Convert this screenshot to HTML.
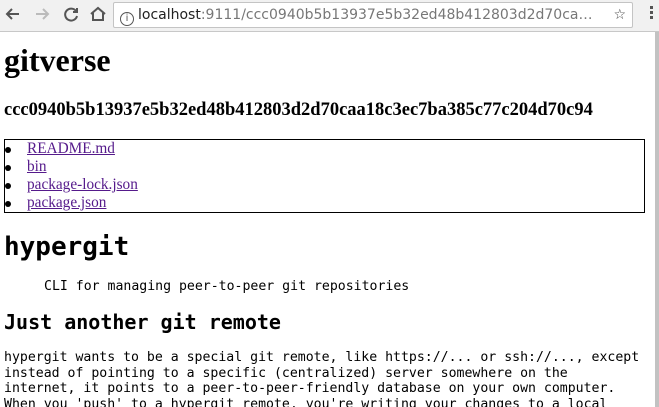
<!DOCTYPE html>
<html><head><meta charset="utf-8"><style>
html,body{margin:0;padding:0;width:659px;height:407px;overflow:hidden;background:#fff}
#chrome{position:absolute;left:0;top:0;width:659px;height:31px;background:#f1f1f1;border-bottom:1px solid #c8c8c8;font-family:"DejaVu Sans",sans-serif}
#url{position:absolute;left:113px;top:2px;width:518px;height:24px;background:#fff;border:1px solid #c4c4c4;border-radius:2px;font-size:14px;line-height:24px;color:#777;white-space:nowrap;overflow:hidden}
#page{position:absolute;left:0;top:32px;width:655px;height:375px;overflow:hidden}
#sb{position:absolute;left:655px;top:32px;width:4px;height:375px;background:#c2c2c2}
.c{margin:0 10px 0 4px;font-family:"Liberation Serif",serif}
h1.t{font-family:"Liberation Serif",serif;font-size:32px;margin:8px 0 0;line-height:40px}
h2.h{font-family:"Liberation Serif",serif;font-size:18.5px;margin:18px 0 0;line-height:24px;white-space:nowrap}
ul{margin:17px 0 0;padding:0 0 0 22px;border:1px solid #000;list-style:none;font-size:15.3px;line-height:18px}
ul li{position:relative}
ul li::before{content:"";position:absolute;left:-22px;top:7px;width:6px;height:6px;border-radius:50%;background:#000}
a{color:#551a8b;text-decoration:underline}
.m{font-family:"DejaVu Sans Mono",monospace}
h1.m{font-size:26px;margin:17px 0 0;line-height:34px}
pre{font-family:"DejaVu Sans Mono",monospace;font-size:13.2px;margin:15px 0 0 40px}
h2.m{font-size:20px;margin:14px 0 0;line-height:28px}
p.m{font-size:13.2px;line-height:15.7px;margin:14px 0 0;white-space:pre}
</style></head><body>
<div id="chrome">
<svg width="110" height="31" style="position:absolute;left:0;top:0">
<g fill="none" stroke-width="2">
<path d="M19 14H7M12 9l-5 5 5 5" stroke="#555"/>
<path d="M36 14h12M43 9l5 5-5 5" stroke="#bbb"/>
<path d="M76 11a6 6 0 1 0 1 5" stroke="#555"/><path d="M77 8v4h-4" stroke="#555"/>
<path d="M91 14l7-6 7 6M93 13v7h10v-7" stroke="#555"/>
</g></svg>
<div id="url"><span style="display:inline-block;width:14px;height:14px;border:1.5px solid #555;border-radius:50%;font-size:10px;line-height:12px;text-align:center;color:#555;margin:0 4px 0 6px;vertical-align:-2px;box-sizing:border-box">i</span><span style="color:#222">localhost</span>:9111/ccc0940b5b13937e5b32ed48b412803d2d70ca…<span style="position:absolute;right:6px;color:#444">☆</span></div>
<div style="position:absolute;left:650px;top:6px;width:3px;font-size:0"><div style="width:3px;height:3px;background:#555;margin-bottom:2px"></div><div style="width:3px;height:3px;background:#555;margin-bottom:2px"></div><div style="width:3px;height:3px;background:#555"></div></div>
</div>
<div id="page"><div class="c">
<h1 class="t">gitverse</h1>
<h2 class="h">ccc0940b5b13937e5b32ed48b412803d2d70caa18c3ec7ba385c77c204d70c94</h2>
<ul><li><a>README.md</a></li><li><a>bin</a></li><li><a>package-lock.json</a></li><li><a>package.json</a></li></ul>
<h1 class="m">hypergit</h1>
<pre>CLI for managing peer-to-peer git repositories</pre>
<h2 class="m">Just another git remote</h2>
<p class="m">hypergit wants to be a special git remote, like https://... or ssh://..., except
instead of pointing to a specific (centralized) server somewhere on the
internet, it points to a peer-to-peer-friendly database on your own computer.
When you 'push' to a hypergit remote, you're writing your changes to a local</p>
</div></div>
<div id="sb"></div>
</body></html>
